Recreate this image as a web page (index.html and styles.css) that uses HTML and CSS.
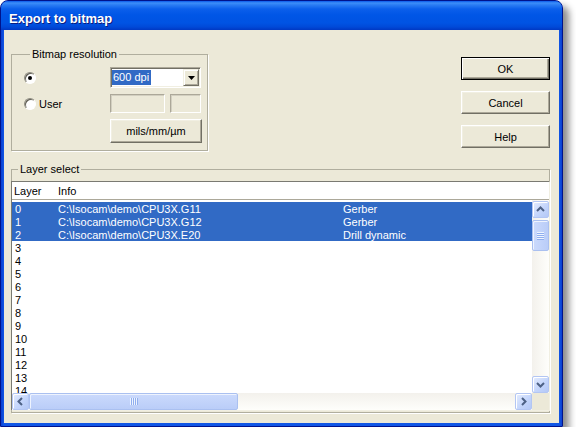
FILE: index.html
```html
<!DOCTYPE html>
<html lang="en">
<head>
<meta charset="utf-8">
<title>Export to bitmap</title>
<link rel="stylesheet" href="styles.css">
</head>
<body>
<div class="window">
  <div class="titlebar">Export to bitmap</div>
  <div class="client">
    <div class="top-row">
      <fieldset class="group res-group">
        <legend>Bitmap resolution</legend>
        <div class="res-grid">
          <label class="radio"><span class="radio-mark checked"></span></label>
          <div class="combo">
            <span class="combo-value"><span class="sel">600 dpi</span></span>
            <span class="combo-btn"><svg width="7" height="4" viewBox="0 0 7 4"><polygon points="0,0 7,0 3.5,4" fill="#000"/></svg></span>
          </div>
          <label class="radio"><span class="radio-mark"></span>User</label>
          <div class="edits"><span class="edit wide"></span><span class="edit narrow"></span></div>
          <span class="spacer"></span>
          <button class="btn units">mils/mm/µm</button>
        </div>
      </fieldset>
      <div class="actions">
        <button class="btn default">OK</button>
        <button class="btn">Cancel</button>
        <button class="btn">Help</button>
      </div>
    </div>
    <fieldset class="group layer-group">
      <legend>Layer select</legend>
      <div class="list">
        <div class="list-head"><span>Layer</span><span>Info</span></div>
        <div class="list-body">
          <div class="rows">
            <div class="row selected"><span>0</span><span>C:\Isocam\demo\CPU3X.G11</span><span>Gerber</span></div>
            <div class="row selected"><span>1</span><span>C:\Isocam\demo\CPU3X.G12</span><span>Gerber</span></div>
            <div class="row selected"><span>2</span><span>C:\Isocam\demo\CPU3X.E20</span><span>Drill dynamic</span></div>
            <div class="row"><span>3</span></div>
            <div class="row"><span>4</span></div>
            <div class="row"><span>5</span></div>
            <div class="row"><span>6</span></div>
            <div class="row"><span>7</span></div>
            <div class="row"><span>8</span></div>
            <div class="row"><span>9</span></div>
            <div class="row"><span>10</span></div>
            <div class="row"><span>11</span></div>
            <div class="row"><span>12</span></div>
            <div class="row"><span>13</span></div>
            <div class="row"><span>14</span></div>
          </div>
          <div class="vscroll">
            <span class="sb-btn"><svg width="15" height="15" viewBox="0 0 15 15"><polyline points="4,9 7.5,5.5 11,9" /></svg></span>
            <span class="thumb v"><span class="grip"></span></span>
            <span class="track-fill"></span>
            <span class="sb-btn"><svg width="15" height="15" viewBox="0 0 15 15"><polyline points="4,6 7.5,9.5 11,6" /></svg></span>
          </div>
          <div class="hscroll">
            <span class="sb-btn"><svg width="15" height="15" viewBox="0 0 15 15"><polyline points="9,4 5.5,7.5 9,11" /></svg></span>
            <span class="thumb h"><span class="grip"></span></span>
            <span class="track-fill"></span>
            <span class="sb-btn"><svg width="15" height="15" viewBox="0 0 15 15"><polyline points="6,4 9.5,7.5 6,11" /></svg></span>
          </div>
          <div class="corner"></div>
        </div>
      </div>
    </fieldset>
  </div>
</div>
</body>
</html>
```

FILE: styles.css
```css
* { box-sizing: border-box; }

body {
  margin: 0;
  background: #fff;
  font-family: "Liberation Sans", Arial, sans-serif;
  font-size: 11px;
  color: #000;
}

/* dialog frame */
.window {
  width: 563px;
  height: 427px;
  display: flex;
  flex-direction: column;
  background: linear-gradient(to right, #0A3FD0, #1157E6 3px, #1157E6 calc(100% - 3px), #0A3FD0);
  border: 1px solid #00138C;
  border-radius: 8px 8px 0 0;
  padding: 0 3px 3px;
  box-shadow: 6px 6px 7px rgba(0, 0, 0, 0.45);
}

.titlebar {
  flex: none;
  height: 29px;
  margin: 0 -3px;
  padding: 9px 0 0 8px;
  border-radius: 7px 7px 0 0;
  background: linear-gradient(#0A5AEB 0px, #3D8FF8 2px, #2A7CF3 4px, #0B5FEB 8px, #0056E6 14px, #0053E3 22px, #0049D8 26px, #0038C3 29px);
  color: #fff;
  font-weight: bold;
  font-size: 13px;
  line-height: 17px;
  text-shadow: 1px 1px #0A1C80;
}

.client {
  flex: 1;
  min-height: 0;
  background: #ECE9D8;
  padding: 17px 9px 10px 7px;
  display: flex;
  flex-direction: column;
}

.top-row {
  flex: none;
  display: flex;
  justify-content: space-between;
  align-items: flex-start;
}

/* group boxes */
.group {
  margin: 0;
  min-width: 0;
  border: 1px solid #B0AE9E;
  box-shadow: 1px 1px 0 #fff;
}

.group legend {
  margin-left: 6px;
  padding: 0 2px;
  line-height: 14px;
  font-size: 11px;
}

.res-group {
  width: 197px;
  padding: 6px 6px 7px 12px;
}

.res-grid {
  display: grid;
  grid-template-columns: 86px 92px;
  grid-template-rows: 21px 19px 24px;
  row-gap: 6px;
  align-items: center;
}

.radio {
  display: flex;
  align-items: center;
  gap: 3px;
  height: 100%;
}

.radio-mark {
  width: 12px;
  height: 12px;
  border-radius: 50%;
  border: 1px solid;
  border-color: #8E8C80 #fff #fff #8E8C80;
  background: #fff;
  box-shadow: inset 1px 1px 0 #5E5C52;
  display: flex;
  align-items: center;
  justify-content: center;
}

.radio-mark.checked::after {
  content: "";
  width: 4px;
  height: 4px;
  border-radius: 50%;
  background: #000;
}

.combo {
  width: 91px;
  height: 21px;
  display: flex;
  background: #fff;
  border: 1px solid;
  border-color: #ACA899 #fff #fff #ACA899;
  box-shadow: inset 1px 1px 0 #716F64, inset -1px -1px 0 #F1EFE2;
  padding: 1px;
}

.combo-value {
  flex: 1;
  display: flex;
  align-items: center;
}

.sel {
  background: #316AC5;
  color: #fff;
  line-height: 15px;
  padding: 0 2px 0 1px;
}

.combo-btn {
  width: 16px;
  height: 17px;
  display: flex;
  align-items: center;
  justify-content: center;
  background: #ECE9D8;
  border: 1px solid;
  border-color: #F1EFE2 #716F64 #716F64 #F1EFE2;
  box-shadow: inset 1px 1px 0 #fff, inset -1px -1px 0 #ACA899;
}

.edits {
  display: flex;
  gap: 5px;
  height: 19px;
}

.edit {
  height: 19px;
  background: #ECE9D8;
  border: 1px solid;
  border-color: #ACA899 #fff #fff #ACA899;
  box-shadow: inset 1px 1px 0 #D2CFC0;
}

.edit.wide { width: 55px; }
.edit.narrow { width: 31px; }

/* push buttons */
.btn {
  font-family: inherit;
  font-size: 11px;
  font-weight: normal;
  color: #000;
  background: #ECE9D8;
  border: 1px solid;
  border-color: #fff #716F64 #716F64 #fff;
  box-shadow: inset -1px -1px 0 #ACA899, inset 1px 1px 0 #F1EFE2;
  padding: 0;
  margin: 0;
}

.btn.units {
  width: 92px;
  height: 24px;
}

.actions {
  display: flex;
  flex-direction: column;
  gap: 11px;
  margin-top: 10px;
}

.actions .btn {
  width: 89px;
  height: 23px;
}

.btn.default {
  border-color: #000;
  box-shadow: inset 1px 1px 0 #fff, inset -1px -1px 0 #716F64, inset -2px -2px 0 #ACA899;
}

/* layer list */
.layer-group {
  margin-top: 11px;
  width: 539px;
  padding: 5px 0 1px;
  flex: 1;
  min-height: 0;
  display: flex;
  flex-direction: column;
}

.list {
  margin: 0 -1px;
  flex: 1;
  min-height: 0;
  display: flex;
  flex-direction: column;
  background: #fff;
  border: 1px solid;
  border-color: #7A7A72 #F1EFE2 #F1EFE2 #7A7A72;
}

.list-head {
  flex: none;
  height: 18px;
  display: grid;
  grid-template-columns: 44px 1fr;
  padding: 1px 0 0 2px;
  line-height: 17px;
  border-bottom: 1px solid #ACA899;
}

.list-body {
  flex: 1;
  min-height: 0;
  display: grid;
  grid-template-columns: 1fr 17px;
  grid-template-rows: minmax(0, 1fr) 17px;
}

.rows {
  overflow: hidden;
  min-height: 0;
  padding-top: 2px;
}

.row {
  display: grid;
  grid-template-columns: 43px 285px 1fr;
  height: 13px;
  line-height: 15px;
  padding-left: 3px;
  white-space: nowrap;
}

.row.selected {
  background: #316AC5;
  color: #fff;
}

/* scroll bars */
.vscroll, .hscroll {
  display: flex;
  min-height: 0;
}

.vscroll {
  flex-direction: column;
  padding-top: 1px;
  background: linear-gradient(to right, #F3F1EC, #FEFEFB);
}

.hscroll {
  background: linear-gradient(#F3F1EC, #FEFEFB);
}

.track-fill { flex: 1; }

.sb-btn {
  width: 17px;
  height: 17px;
  flex: none;
  display: flex;
  align-items: center;
  justify-content: center;
  border: 1px solid #B3C6F3;
  border-radius: 2px;
  background: linear-gradient(135deg, #E4ECFE, #C2D4FB 60%, #B4C8F6);
  box-shadow: inset 1px 1px 0 #fff;
}

.sb-btn polyline {
  fill: none;
  stroke: #4D6185;
  stroke-width: 2;
}

.thumb {
  flex: none;
  display: flex;
  align-items: center;
  justify-content: center;
  border: 1px solid #AAC0F0;
  border-radius: 2px;
  background: linear-gradient(to right, #CBDAFC, #BACDF8);
  box-shadow: inset 1px 1px 0 #EEF3FE;
}

.thumb.v {
  height: 31px;
  margin-top: 2px;
}

.thumb.h {
  width: 209px;
  background: linear-gradient(#CBDAFC, #BACDF8);
}

.thumb.v .grip {
  width: 7px;
  height: 8px;
  background: repeating-linear-gradient(#EEF4FE 0 1px, #8FAEEF 1px 2px);
}

.thumb.h .grip {
  width: 8px;
  height: 7px;
  background: repeating-linear-gradient(to right, #EEF4FE 0 1px, #8FAEEF 1px 2px);
}

.corner {
  background: #ECE9D8;
}
```
